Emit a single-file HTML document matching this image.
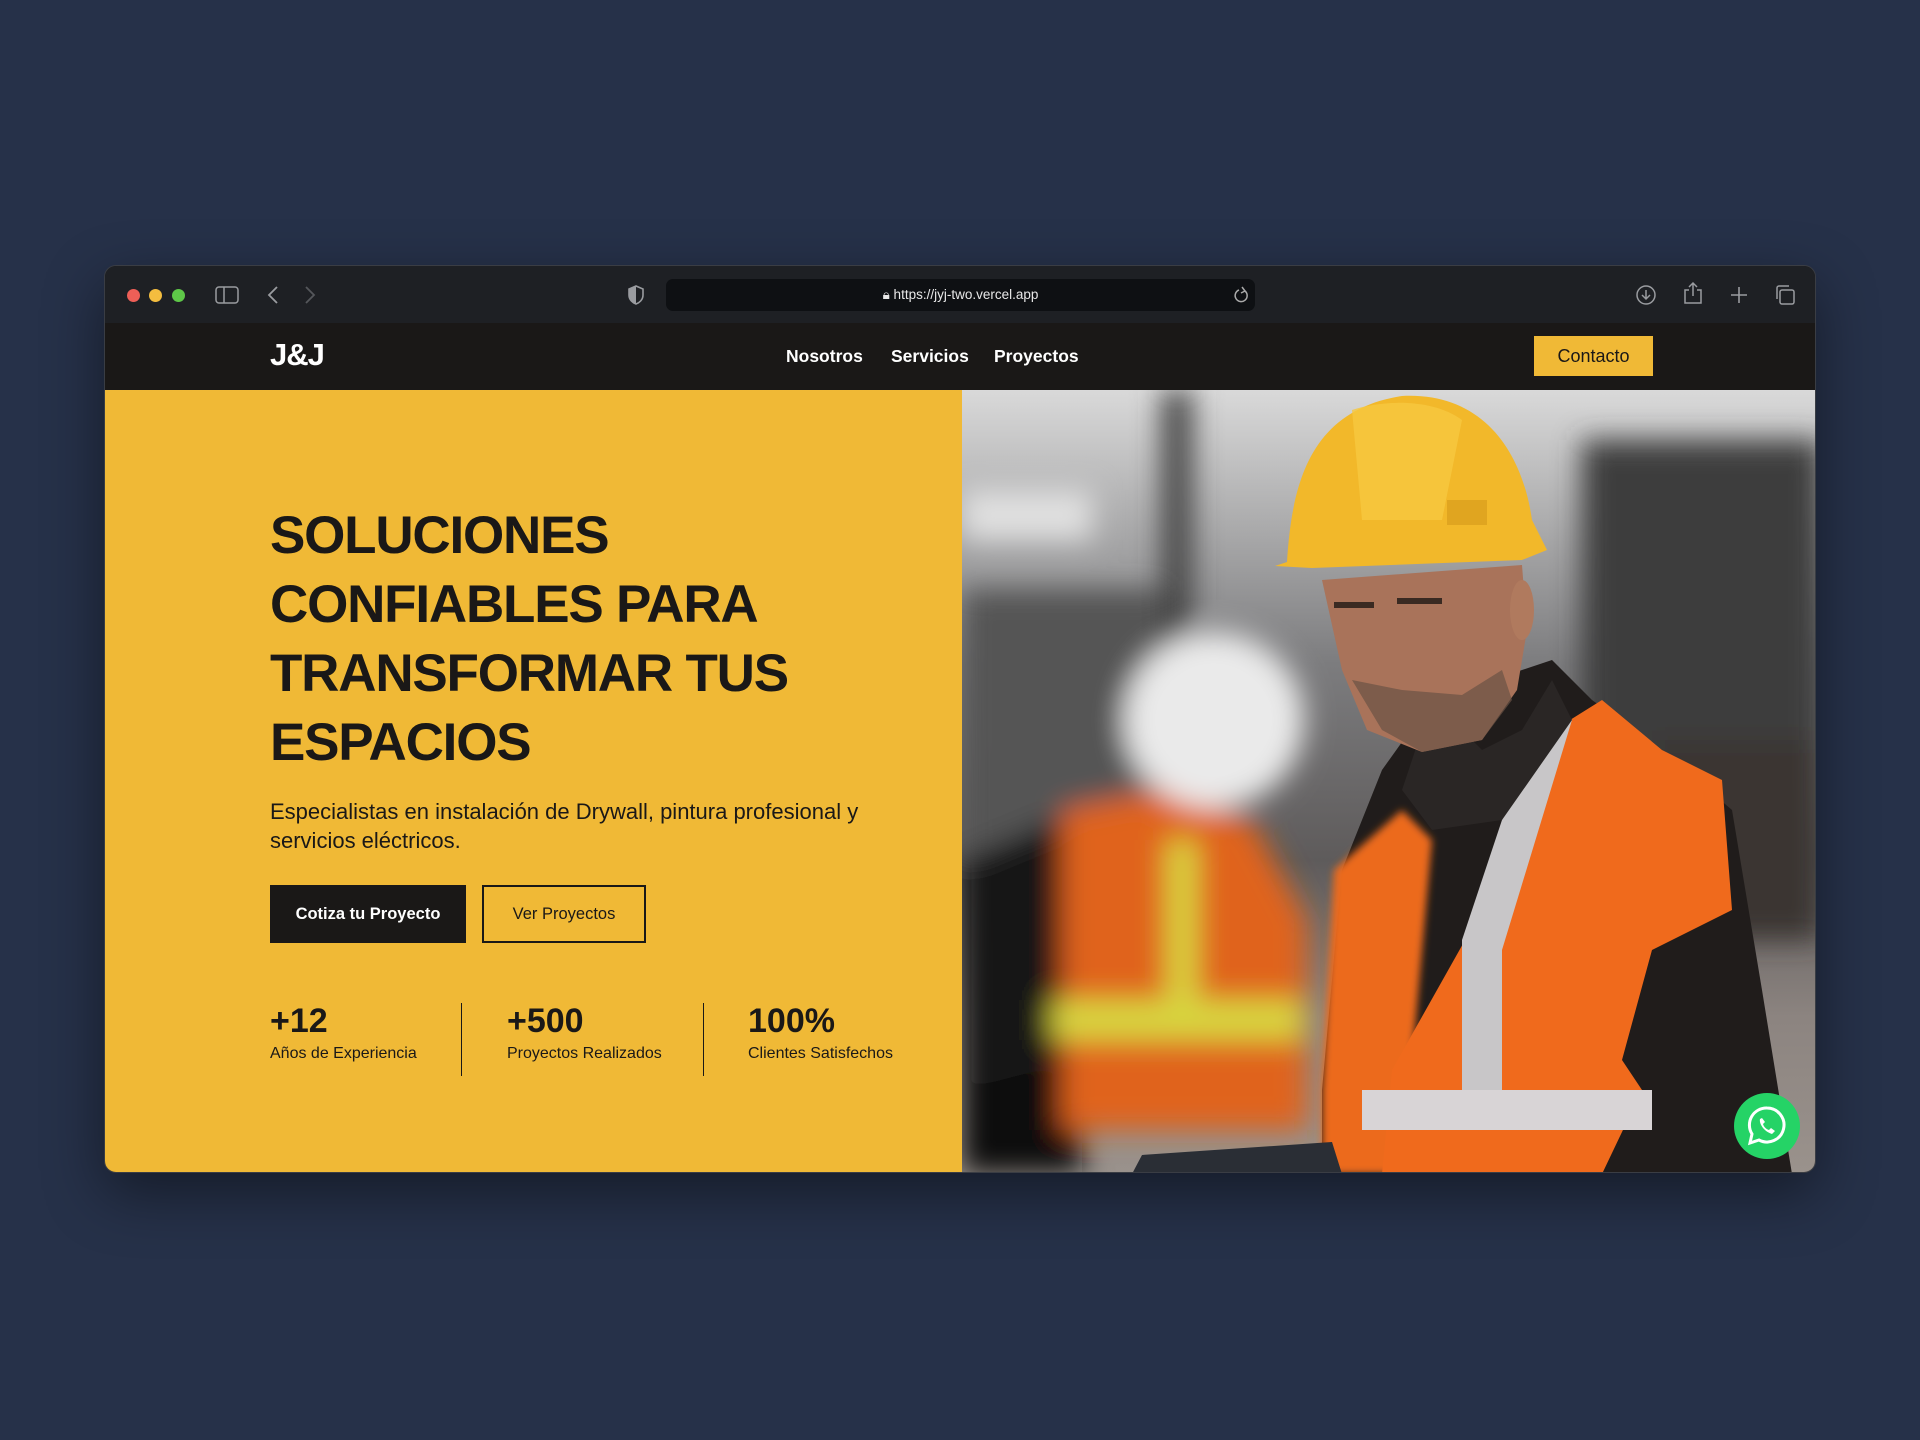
<!DOCTYPE html>
<html><head><meta charset="utf-8"><style>
*{margin:0;padding:0;box-sizing:border-box}
body{width:1920px;height:1440px;background:#263149;position:relative;overflow:hidden;font-family:"Liberation Sans",sans-serif}
.win{position:absolute;left:104px;top:265px;width:1712px;height:908px;border-radius:12px;overflow:hidden;background:#1a1817;box-shadow:0 20px 60px rgba(0,0,0,.45);border:1px solid #3a3d44}
.tb{position:absolute;left:0;top:0;width:100%;height:57px;background:#1e2024}
.dot{position:absolute;top:23px;width:13px;height:13px;border-radius:50%}
.url{position:absolute;left:561px;top:13px;width:589px;height:32px;background:#0e1013;border-radius:7px;color:#e8e8e8;font-size:13.5px;text-align:center;line-height:32px}
.nav{position:absolute;top:57px;left:0;width:100%;height:67px;background:#1a1817}
.logo{position:absolute;left:165px;top:14px;color:#fff;font-size:31px;font-weight:bold;letter-spacing:-1px}
.nl{position:absolute;top:23px;color:#fff;font-size:17.5px;font-weight:bold}
.ct{position:absolute;left:1429px;top:13px;width:119px;height:40px;background:#f0b936;color:#1a1817;font-size:18px;text-align:center;line-height:40px}
.hero{position:absolute;top:124px;left:0;width:857px;height:784px;background:#f0b936}
h1{position:absolute;left:165px;top:111px;font-size:53px;line-height:69px;color:#1a1817;font-weight:bold;letter-spacing:-1.2px;width:640px}
.p{position:absolute;left:165px;top:407px;width:640px;font-size:22px;line-height:29px;color:#1a1817}
.b1{position:absolute;left:165px;top:495px;width:196px;height:58px;background:#1a1817;color:#fff;font-size:16.5px;font-weight:bold;text-align:center;line-height:58px}
.b2{position:absolute;left:377px;top:495px;width:164px;height:58px;border:2px solid #1a1817;color:#1a1817;font-size:16.5px;text-align:center;line-height:54px}
.sn{position:absolute;top:612px;font-size:34px;font-weight:bold;color:#1a1817}
.sl{position:absolute;top:655px;font-size:16px;color:#1a1817}
.dv{position:absolute;top:613px;width:1px;height:73px;background:#1a1817}
.img{position:absolute;left:857px;top:124px;width:855px;height:784px;overflow:hidden}
</style></head><body>
<div class="win">
 <div class="tb">
  <div class="dot" style="left:22px;background:#ee5f57"></div>
  <div class="dot" style="left:44px;background:#f4bd3f"></div>
  <div class="dot" style="left:67px;background:#5ec748"></div>
  <svg style="position:absolute;left:110px;top:20px" width="24" height="18" fill="none" stroke="#9a9ca0" stroke-width="1.5"><rect x="1" y="1" width="22" height="16" rx="3"/><line x1="9" y1="1" x2="9" y2="17"/></svg>
  <svg style="position:absolute;left:162px;top:20px" width="12" height="18" fill="none" stroke="#9a9ca0" stroke-width="1.8"><path d="M10 1 L2 9 L10 17"/></svg>
  <svg style="position:absolute;left:199px;top:20px" width="12" height="18" fill="none" stroke="#55575b" stroke-width="1.8"><path d="M2 1 L10 9 L2 17"/></svg>
  <svg style="position:absolute;left:523px;top:19px" width="16" height="20"><path d="M8 1 L15 4 V10 C15 15 11 18 8 19 C5 18 1 15 1 10 V4Z" fill="none" stroke="#9a9ca0" stroke-width="1.6"/><path d="M8 1 L1 4 V10 C1 15 5 18 8 19Z" fill="#9a9ca0"/></svg>
  <div class="url">🔒︎ https://jyj-two.vercel.app</div>
  <svg style="position:absolute;left:1128px;top:20px" width="16" height="18" fill="none" stroke="#aaa" stroke-width="1.5"><path d="M12 5 A6 6 0 1 1 6 4"/><path d="M9 1 L12 5 L8 7"/></svg>
  <svg style="position:absolute;left:1530px;top:18px" width="22" height="22" fill="none" stroke="#9a9ca0" stroke-width="1.5"><circle cx="11" cy="11" r="9"/><path d="M11 6 V15 M7 11 L11 15 L15 11"/></svg>
  <svg style="position:absolute;left:1578px;top:15px" width="20" height="24" fill="none" stroke="#9a9ca0" stroke-width="1.5"><path d="M6 9 H2 V22 H18 V9 H14 M10 15 V2 M6 6 L10 2 L14 6"/></svg>
  <svg style="position:absolute;left:1624px;top:19px" width="20" height="20" stroke="#9a9ca0" stroke-width="1.6"><path d="M10 2 V18 M2 10 H18"/></svg>
  <svg style="position:absolute;left:1669px;top:18px" width="22" height="22" fill="none" stroke="#9a9ca0" stroke-width="1.5"><rect x="6" y="6" width="14" height="14" rx="2"/><path d="M3 15 V4 A2 2 0 0 1 5 2 H15"/></svg>
 </div>
 <div class="nav">
  <div class="logo">J&amp;J</div>
  <div class="nl" style="left:681px">Nosotros</div>
  <div class="nl" style="left:786px">Servicios</div>
  <div class="nl" style="left:889px">Proyectos</div>
  <div class="ct">Contacto</div>
 </div>
 <div class="hero">
  <h1>SOLUCIONES CONFIABLES PARA TRANSFORMAR TUS ESPACIOS</h1>
  <div class="p">Especialistas en instalación de Drywall, pintura profesional y servicios eléctricos.</div>
  <div class="b1">Cotiza tu Proyecto</div>
  <div class="b2">Ver Proyectos</div>
  <div class="sn" style="left:165px">+12</div><div class="sl" style="left:165px">Años de Experiencia</div>
  <div class="dv" style="left:356px"></div>
  <div class="sn" style="left:402px">+500</div><div class="sl" style="left:402px">Proyectos Realizados</div>
  <div class="dv" style="left:598px"></div>
  <div class="sn" style="left:643px">100%</div><div class="sl" style="left:643px">Clientes Satisfechos</div>
 </div>
 <div class="img">
  <svg width="855" height="784">
   <defs>
    <linearGradient id="bg" x1="0" y1="0" x2="0" y2="1"><stop offset="0" stop-color="#d9d9d9"/><stop offset=".35" stop-color="#7c7c7e"/><stop offset=".6" stop-color="#5e5b5b"/><stop offset=".8" stop-color="#8c8480"/><stop offset="1" stop-color="#9a928c"/></linearGradient>
    <filter id="bl" x="-20%" y="-20%" width="140%" height="140%"><feGaussianBlur stdDeviation="14"/></filter>
    <filter id="bl2"><feGaussianBlur stdDeviation="4"/></filter>
   </defs>
   <rect width="855" height="784" fill="url(#bg)"/>
   <g filter="url(#bl)">
    <rect x="620" y="50" width="240" height="500" fill="#3e3c3e"/>
    <rect x="0" y="100" width="130" height="50" fill="#e0e0e0"/>
    <rect x="200" y="0" width="30" height="400" fill="#444"/>
    <rect x="0" y="200" width="200" height="300" fill="#555"/>
    <rect x="690" y="350" width="165" height="200" fill="#3a3530"/>
    <rect x="0" y="650" width="120" height="134" fill="#111"/>
    <path d="M0 470 L120 420 L200 440 L230 640 L0 700Z" fill="#151515"/>
    <path d="M100 420 L200 400 L290 430 L345 530 L345 740 L100 740Z" fill="#e0641e"/>
    <rect x="90" y="610" width="250" height="40" fill="#d8d640"/>
    <rect x="205" y="450" width="30" height="190" fill="#d8d640"/>
    <ellipse cx="252" cy="330" rx="90" ry="88" fill="#eaeaea"/>
   </g>
   <path d="M420 380 L470 310 L590 270 L630 310 L700 360 L770 420 L800 600 L830 784 L360 784 L360 700 L380 480Z" fill="#201c1b"/>
   <path d="M372 480 L440 420 L470 450 L440 784 L360 784 L360 700Z" fill="#ec6a1e" filter="url(#bl2)"/>
   <path d="M560 360 L640 310 L700 360 L760 390 L770 520 L690 560 L660 670 L680 700 L640 784 L420 784 L430 680 L520 520Z" fill="#f06a1c"/>
   <path d="M570 340 L610 330 L540 560 L540 705 L500 705 L500 550Z" fill="#c8c6c8"/>
   <rect x="400" y="700" width="290" height="40" fill="#d8d4d6"/>
   <path d="M470 310 L520 360 L560 340 L590 290 L610 330 L540 430 L470 440 L440 400Z" fill="#2a2625"/>
   <path d="M360 190 L560 175 L565 240 L555 300 L520 350 L460 362 L405 340 L380 280 Z" fill="#a9735a"/>
   <path d="M390 290 L420 340 L460 362 L520 350 L550 310 L540 280 L500 305 L440 300Z" fill="#6b5245" opacity=".7"/>
   <ellipse cx="560" cy="220" rx="12" ry="30" fill="#b07a5e"/>
   <rect x="372" y="212" width="40" height="6" fill="#3a2a22"/>
   <rect x="435" y="208" width="45" height="6" fill="#3a2a22"/>
   <path d="M325 172 C330 90 350 20 440 6 C520 2 560 60 570 130 L585 160 L560 170 L350 178 L313 176Z" fill="#f2b82a"/>
   <path d="M390 20 C420 10 470 8 500 30 L480 130 L400 130Z" fill="#f6c840" opacity=".8"/>
   <rect x="485" y="110" width="40" height="25" fill="#e0a520"/>
   <path d="M170 784 L180 765 L370 752 L380 784Z" fill="#2a2e35"/>
  </svg>
  <svg style="position:absolute;left:772px;top:703px" width="66" height="66"><circle cx="33" cy="33" r="33" fill="#25d366"/><path d="M33 15 A17 17 0 0 0 18 41 L16 50 L25 47 A17 17 0 1 0 33 15Z" fill="none" stroke="#fff" stroke-width="3"/><path d="M26 26 C25 30 29 38 38 41 L41 38 L37 35 L35 37 C32 36 30 34 29 31 L31 29 L28 25Z" fill="#fff"/></svg>
 </div>
</div>
</body></html>
